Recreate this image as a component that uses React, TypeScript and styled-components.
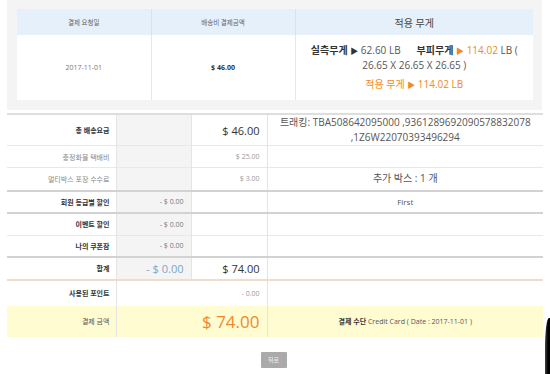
import styled, { createGlobalStyle } from "styled-components";

const GlobalStyle = createGlobalStyle`
  html, body {
    margin: 0;
    padding: 0;
    background: #ffffff;
  }
  body {
    font-family: "Open Sans", "Noto Sans CJK KR", sans-serif;
    color: #333;
  }
`;

const Page = styled.div`
  position: relative;
  width: 550px;
  height: 374px;
  overflow: hidden;
  padding-left: 7px;
  box-sizing: border-box;
`;

const SummaryPanel = styled.div`
  width: 535px;
  box-sizing: border-box;
  background: #f4f4f4;
  padding: 9px 9px 10px 10px;
`;

const SummaryTable = styled.table`
  width: 516px;
  border-collapse: collapse;
  background: #fff;
  table-layout: fixed;
`;

const HeadCell = styled.th<{ $big?: boolean }>`
  height: 26px;
  padding: 0;
  background: #e6f0fa;
  border-right: 1px solid #d8e2ec;
  font-size: ${(p) => (p.$big ? "10px" : "6.5px")};
  font-weight: 400;
  color: ${(p) => (p.$big ? "#444" : "#666")};
  &:last-child {
    border-right: none;
  }
`;

const BodyCell = styled.td<{ $bold?: boolean }>`
  height: 65px;
  padding: 0;
  text-align: center;
  border-right: 1px solid #e4e8ec;
  font-size: 7px;
  font-weight: ${(p) => (p.$bold ? 700 : 400)};
  color: ${(p) => (p.$bold ? "#333" : "#777")};
  &:last-child {
    border-right: none;
  }
`;

const WeightLine = styled.div`
  font-size: 10px;
  line-height: 15px;
  color: #555;
`;

const WeightLabel = styled.b`
  color: #333;
  font-weight: 700;
`;

const Arrow = styled.span<{ $accent?: boolean }>`
  font-size: 8px;
  color: ${(p) => (p.$accent ? "#f08a24" : "#333")};
`;

const Accent = styled.span`
  color: #f08a24;
`;

const AppliedLine = styled.div`
  margin-top: 4px;
  font-size: 10px;
  line-height: 15px;
  color: #f08a24;
`;

const Gap = styled.span`
  display: inline-block;
  width: 16px;
`;

const FeeTable = styled.table`
  margin-top: 3px;
  width: 536px;
  border-collapse: collapse;
  table-layout: fixed;
  border-top: 2px solid #dedede;
`;

type Line = "thin" | "thick" | "tan" | "none";

const lineColor: Record<Line, string> = {
  thin: "1px solid #e8e8e8",
  thick: "2px solid #d2d2d2",
  tan: "2px solid #efdccb",
  none: "none",
};

const Row = styled.tr<{ $h: number; $line: Line; $yellow?: boolean }>`
  height: ${(p) => p.$h}px;
  border-bottom: ${(p) => lineColor[p.$line]};
  background: ${(p) => (p.$yellow ? "#fffcd2" : "transparent")};
`;

const Label = styled.td<{ $weight?: "bold" | "muted" | "plain" }>`
  padding: 0 6px 0 0;
  text-align: right;
  font-size: 7px;
  font-weight: ${(p) => (!p.$weight || p.$weight === "bold" ? 700 : 400)};
  color: ${(p) => (p.$weight === "muted" ? "#888" : p.$weight === "plain" ? "#555" : "#333")};
  border-right: 1px solid #e4e4e4;
`;

const Value = styled.td<{ $gray?: boolean; $size?: number; $color?: string }>`
  padding: 0 7px 0 0;
  text-align: right;
  font-size: ${(p) => p.$size ?? 7}px;
  color: ${(p) => p.$color ?? "#777"};
  background: ${(p) => (p.$gray ? "#f4f4f4" : "transparent")};
  border-right: 1px solid #e4e4e4;
  white-space: nowrap;
`;

const Info = styled.td<{ $size?: number }>`
  padding: 0 4px;
  text-align: center;
  font-size: ${(p) => p.$size ?? 10}px;
  line-height: 15px;
  color: #555;
`;

const PayLabel = styled.b`
  color: #333;
  font-weight: 700;
`;

const Footer = styled.div`
  display: flex;
  justify-content: center;
  padding-top: 15px;
  padding-right: 10px;
`;

const BackButton = styled.button`
  width: 26px;
  height: 16px;
  padding: 0;
  border: none;
  border-radius: 1px;
  background: #aaaaaa;
  color: #f4f4f4;
  font-family: inherit;
  font-size: 6px;
`;

const Bezel = styled.div`
  position: absolute;
  right: 0;
  top: 318px;
  width: 5px;
  height: 60px;
  background: linear-gradient(90deg, #444 0%, #000 60%);
  border-top-left-radius: 4px 30px;
`;

export default function App() {
  return (
    <Page>
      <GlobalStyle />
      <SummaryPanel>
        <SummaryTable>
          <colgroup>
            <col style={{ width: 134 }} />
            <col style={{ width: 144 }} />
            <col style={{ width: 238 }} />
          </colgroup>
          <thead>
            <tr>
              <HeadCell>결제 요청일</HeadCell>
              <HeadCell>배송비 결제금액</HeadCell>
              <HeadCell $big>적용 무게</HeadCell>
            </tr>
          </thead>
          <tbody>
            <tr>
              <BodyCell>2017-11-01</BodyCell>
              <BodyCell $bold>$ 46.00</BodyCell>
              <BodyCell>
                <WeightLine>
                  <WeightLabel>실측무게</WeightLabel> <Arrow>▶</Arrow> 62.60 LB
                  <Gap />
                  <WeightLabel>부피무게</WeightLabel> <Arrow $accent>▶</Arrow>{" "}
                  <Accent>114.02</Accent> LB (
                </WeightLine>
                <WeightLine>26.65 X 26.65 X 26.65 )</WeightLine>
                <AppliedLine>
                  적용 무게 <Arrow $accent>▶</Arrow> 114.02 LB
                </AppliedLine>
              </BodyCell>
            </tr>
          </tbody>
        </SummaryTable>
      </SummaryPanel>

      <FeeTable>
        <colgroup>
          <col style={{ width: 109 }} />
          <col style={{ width: 75 }} />
          <col style={{ width: 76 }} />
          <col style={{ width: 276 }} />
        </colgroup>
        <tbody>
          <Row $h={28} $line="thin">
            <Label>총 배송요금</Label>
            <Value $gray />
            <Value $size={11} $color="#333">$ 46.00</Value>
            <Info>
              트래킹: TBA508642095000 ,9361289692090578832078
              <br />
              ,1Z6W22070393496294
            </Info>
          </Row>
          <Row $h={22} $line="thin">
            <Label $weight="muted">충정화물 택배비</Label>
            <Value $gray />
            <Value $color="#999">$ 25.00</Value>
            <Info />
          </Row>
          <Row $h={23} $line="thick">
            <Label $weight="muted">멀티박스 포장 수수료</Label>
            <Value $gray />
            <Value $color="#999">$ 3.00</Value>
            <Info>추가 박스 : 1 개</Info>
          </Row>
          <Row $h={22} $line="thick">
            <Label>회원 등급별 할인</Label>
            <Value $gray>- $ 0.00</Value>
            <Value />
            <Info $size={8}>First</Info>
          </Row>
          <Row $h={23} $line="thin">
            <Label>이벤트 할인</Label>
            <Value $gray>- $ 0.00</Value>
            <Value />
            <Info />
          </Row>
          <Row $h={21} $line="thick">
            <Label>나의 쿠폰잠</Label>
            <Value $gray>- $ 0.00</Value>
            <Value />
            <Info />
          </Row>
          <Row $h={23} $line="tan">
            <Label>합계</Label>
            <Value $gray $size={11} $color="#7aa7c7">
              - $ 0.00
            </Value>
            <Value $size={11} $color="#333">$ 74.00</Value>
            <Info />
          </Row>
          <Row $h={26} $line="none">
            <Label>사용된 포인트</Label>
            <Value colSpan={2} $color="#999">- 0.00</Value>
            <Info />
          </Row>
          <Row $h={31} $line="none" $yellow>
            <Label $weight="plain">결제 금액</Label>
            <Value colSpan={2} $size={17} $color="#ee8a2e">
              $ 74.00
            </Value>
            <Info $size={7}>
              <PayLabel>결제 수단</PayLabel> Credit Card ( Date : 2017-11-01 )
            </Info>
          </Row>
        </tbody>
      </FeeTable>

      <Footer>
        <BackButton>뒤로</BackButton>
      </Footer>
      <Bezel />
    </Page>
  );
}
